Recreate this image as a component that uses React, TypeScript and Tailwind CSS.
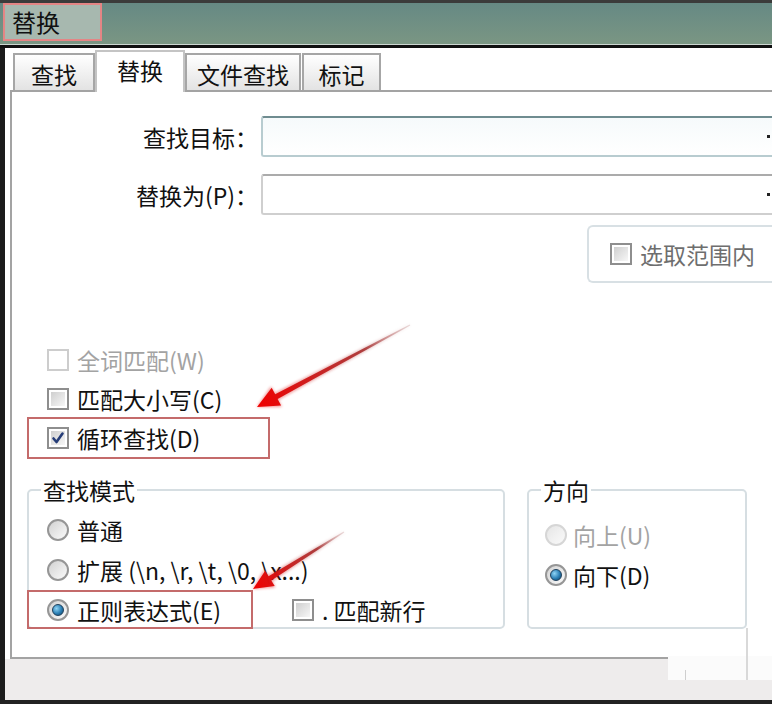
import React from 'react';

type Pt = [number, number];

// builds a tapered arrow polygon from tail (t) to tip (p)
function arrowPoints(t: Pt, p: Pt, head: number, headW: number, shaftW: number) {
  const dx = p[0] - t[0];
  const dy = p[1] - t[1];
  const len = Math.hypot(dx, dy);
  const ux = dx / len;
  const uy = dy / len;
  const nx = -uy;
  const ny = ux;
  const bx = p[0] - head * ux;
  const by = p[1] - head * uy;
  const pts: Pt[] = [
    [t[0] + 0.6 * nx, t[1] + 0.6 * ny],
    [bx + shaftW * nx, by + shaftW * ny],
    [bx + headW * nx, by + headW * ny],
    p,
    [bx - headW * nx, by - headW * ny],
    [bx - shaftW * nx, by - shaftW * ny],
    [t[0] - 0.6 * nx, t[1] - 0.6 * ny],
  ];
  return pts.map((q) => `${q[0].toFixed(1)},${q[1].toFixed(1)}`).join(' ');
}

const arrows: { id: string; t: Pt; p: Pt; head: number; w: number }[] = [
  { id: 'a1', t: [410, 325], p: [257, 407], head: 22, w: 10 },
  { id: 'a2', t: [344, 532], p: [253, 589], head: 20, w: 9 },
];

function CheckBox({ checked = false, disabled = false }: { checked?: boolean; disabled?: boolean }) {
  return (
    <span
      className={
        disabled
          ? 'w-[22px] h-[22px] shrink-0 border-2 border-[#cdcdcd] bg-white flex items-center justify-center'
          : 'w-[22px] h-[22px] shrink-0 border-2 border-[#8e8e8e] bg-white p-[2px] flex'
      }
    >
      {!disabled && (
        <span className="flex-1 bg-gradient-to-br from-[#cfcfcf] to-[#f7f7f7] flex items-center justify-center">
          {checked && (
            <svg width="14" height="14" viewBox="0 0 14 14">
              <path d="M2.5 7.5 L5.5 11 L11.5 2.5" fill="none" stroke="#263d78" strokeWidth="2.6" strokeLinecap="round" strokeLinejoin="round" />
            </svg>
          )}
        </span>
      )}
    </span>
  );
}

function Radio({ checked = false, disabled = false }: { checked?: boolean; disabled?: boolean }) {
  return (
    <span
      className={
        disabled
          ? 'w-[22px] h-[22px] shrink-0 rounded-full border-2 border-[#d6d6d6] bg-gradient-to-br from-[#e6e6e6] to-[#fafafa]'
          : 'w-[22px] h-[22px] shrink-0 rounded-full border-2 border-[#969696] bg-gradient-to-br from-[#d2d2d2] to-[#fbfbfb] flex items-center justify-center'
      }
    >
      {checked && (
        <span className="w-[12px] h-[12px] rounded-full border border-[#1d3f5c] bg-[radial-gradient(circle_at_35%_35%,#8fd4f5,#2b7fb4_55%,#0f3d60)]" />
      )}
    </span>
  );
}

export default function App() {
  return (
    <div className="relative w-[772px] h-[704px] bg-[#1f1f1f] flex flex-col overflow-hidden font-['Noto_Sans_CJK_SC','Noto_Sans',sans-serif] text-[#111]">
      {/* title bar */}
      <div className="h-[3px] bg-[#3b3b3b]" />
      <div className="h-[41px] bg-gradient-to-b from-[#668984] to-[#7a9683] flex items-center pl-[3px]">
        <div className="h-[38px] w-[99px] -mt-[3px] border-2 border-[#e48585] bg-[#a7b8af] flex items-center pl-[7px] text-[24px] leading-none">
          替换
        </div>
      </div>
      <div className="h-[1px] bg-[#cdd7d2]" />
      <div className="h-[3px] bg-[#101010]" />

      <div className="flex-1 flex">
        <div className="w-[5px] bg-[#1b1b1b]" />
        <div className="flex-1 bg-white flex flex-col">
          {/* tabs */}
          <div className="h-[42px] flex items-end pl-[8px] relative z-10">
            <div className="w-[82px] h-[37px] border-2 border-b-0 border-[#a6a6a6] bg-gradient-to-b from-white to-[#e3e3e3] flex items-center justify-center pt-[2px] text-[23px] leading-[26px]">
              查找
            </div>
            <div className="w-[90px] h-[42px] -mb-[2px] border-2 border-b-0 border-[#c4c4c4] bg-white flex items-start justify-center pt-[5px] text-[23px] leading-[26px]">
              替换
            </div>
            <div className="w-[116px] h-[37px] border-2 border-b-0 border-[#a6a6a6] bg-gradient-to-b from-white to-[#e3e3e3] flex items-center justify-center pt-[2px] text-[23px] leading-[26px]">
              文件查找
            </div>
            <div className="w-[79px] h-[37px] ml-[1px] border-2 border-b-0 border-[#a6a6a6] bg-gradient-to-b from-white to-[#e3e3e3] flex items-center justify-center pt-[2px] text-[23px] leading-[26px]">
              标记
            </div>
          </div>

          {/* panel */}
          <div className="flex-1 ml-[5px] border-l-2 border-t-2 border-b-2 border-[#a3a3a3] bg-white flex flex-col">
            <div className="mt-[24px] flex items-center h-[41px]">
              <div className="w-[246px] text-right text-[23px] leading-[26px]">查找目标：</div>
              <div className="flex-1 ml-[3px] h-[41px] border-2 border-r-0 border-[#b8ccd0] border-t-[#6f8c90] rounded-l-[3px] bg-gradient-to-b from-[#f6fafb] to-white flex items-center justify-end pr-[2px]">
                <span className="w-[3px] h-[3px] bg-[#222]" />
              </div>
            </div>
            <div className="mt-[17px] flex items-center h-[41px]">
              <div className="w-[246px] text-right text-[23px] leading-[26px]">替换为(P)：</div>
              <div className="flex-1 ml-[3px] h-[41px] border-2 border-r-0 border-[#cfcfcf] border-t-[#ababab] rounded-l-[3px] bg-white flex items-center justify-end pr-[2px]">
                <span className="w-[3px] h-[3px] bg-[#222]" />
              </div>
            </div>

            <div className="mt-[10px] ml-[575px] h-[58px] border-2 border-r-0 border-[#d8e0e4] rounded-l-[6px] flex items-center pl-[21px] gap-[8px]">
              <CheckBox />
              <span className="text-[23px] leading-[26px] text-[#6e6e6e]">选取范围内</span>
            </div>

            {/* options */}
            <div className="mt-[57px] ml-[15px] flex flex-col text-[23px] leading-[26px]">
              <div className="h-[40px] flex items-center gap-[8px] border-2 border-transparent pl-[18px]">
                <CheckBox disabled />
                <span className="text-[#a3a3a3]">全词匹配(W)</span>
              </div>
              <div className="h-[37px] flex items-center gap-[8px] border-2 border-transparent pl-[18px]">
                <CheckBox />
                <span>匹配大小写(C)</span>
              </div>
              <div className="h-[42px] w-[243px] flex items-center gap-[8px] border-2 border-[#c46b6b] pl-[18px]">
                <CheckBox checked />
                <span>循环查找(D)</span>
              </div>
            </div>

            {/* groups */}
            <div className="mt-[18px] ml-[15px] flex gap-[22px] text-[23px] leading-[26px]">
              <fieldset className="w-[478px] border-2 border-[#d6dee2] rounded-[5px]">
                <legend className="ml-[12px] px-[2px]">查找模式</legend>
                <div className="pt-[7px] flex flex-col">
                  <div className="h-[40px] -ml-[2px] flex items-center gap-[8px] border-2 border-transparent pl-[18px]">
                    <Radio />
                    <span>普通</span>
                  </div>
                  <div className="h-[40px] -ml-[2px] flex items-center gap-[8px] border-2 border-transparent pl-[18px]">
                    <Radio />
                    <span>扩展 (\n, \r, \t, \0, \x...)</span>
                  </div>
                  <div className="h-[39px] -ml-[2px] -mb-[2px] flex items-center">
                    <div className="w-[226px] h-[39px] flex items-center gap-[8px] border-2 border-[#c46b6b] pl-[18px]">
                      <Radio checked />
                      <span>正则表达式(E)</span>
                    </div>
                    <div className="ml-[39px] flex items-center gap-[8px]">
                      <CheckBox />
                      <span>. 匹配新行</span>
                    </div>
                  </div>
                </div>
              </fieldset>
              <fieldset className="w-[220px] border-2 border-[#d6dee2] rounded-[5px]">
                <legend className="ml-[12px] px-[2px]">方向</legend>
                <div className="pt-[12px] flex flex-col">
                  <div className="h-[40px] flex items-center gap-[6px] border-2 border-transparent pl-[14px]">
                    <Radio disabled />
                    <span className="text-[#a3a3a3]">向上(U)</span>
                  </div>
                  <div className="h-[40px] flex items-center gap-[6px] border-2 border-transparent pl-[14px]">
                    <Radio checked />
                    <span>向下(D)</span>
                  </div>
                </div>
              </fieldset>
            </div>
          </div>

          {/* footer */}
          <div className="h-[41px] bg-[#eeecec]" />
        </div>
      </div>
      <div className="h-[4px] bg-[#222]" />

      {/* erased corner */}
      <div className="absolute left-[668px] top-[656px] w-[104px] h-[24px] bg-[#fbfbfb]" />
      <div className="absolute left-[746px] top-[628px] w-[2px] h-[52px] bg-[#d9d9d9]" />
      <div className="absolute left-[685px] top-[670px] w-[1px] h-[10px] bg-[#cfcfcf]" />

      {/* annotation arrows */}
      <svg className="absolute inset-0 pointer-events-none" width="772" height="704">
        <defs>
          {arrows.map((a) => (
            <linearGradient key={a.id} id={a.id} gradientUnits="userSpaceOnUse" x1={a.t[0]} y1={a.t[1]} x2={a.p[0]} y2={a.p[1]}>
              <stop offset="0" stopColor="#c89a9a" stopOpacity="0.35" />
              <stop offset="0.3" stopColor="#a83030" stopOpacity="0.9" />
              <stop offset="1" stopColor="#f00000" />
            </linearGradient>
          ))}
          <filter id="glow" x="-20%" y="-20%" width="140%" height="140%">
            <feGaussianBlur stdDeviation="1.6" />
          </filter>
        </defs>
        {arrows.map((a) => (
          <g key={a.id}>
            <polygon points={arrowPoints(a.t, a.p, a.head, a.w + 1.5, 3.8)} fill={`url(#${a.id})`} opacity="0.45" filter="url(#glow)" />
            <polygon points={arrowPoints(a.t, a.p, a.head, a.w, 2.6)} fill={`url(#${a.id})`} />
          </g>
        ))}
      </svg>
    </div>
  );
}
